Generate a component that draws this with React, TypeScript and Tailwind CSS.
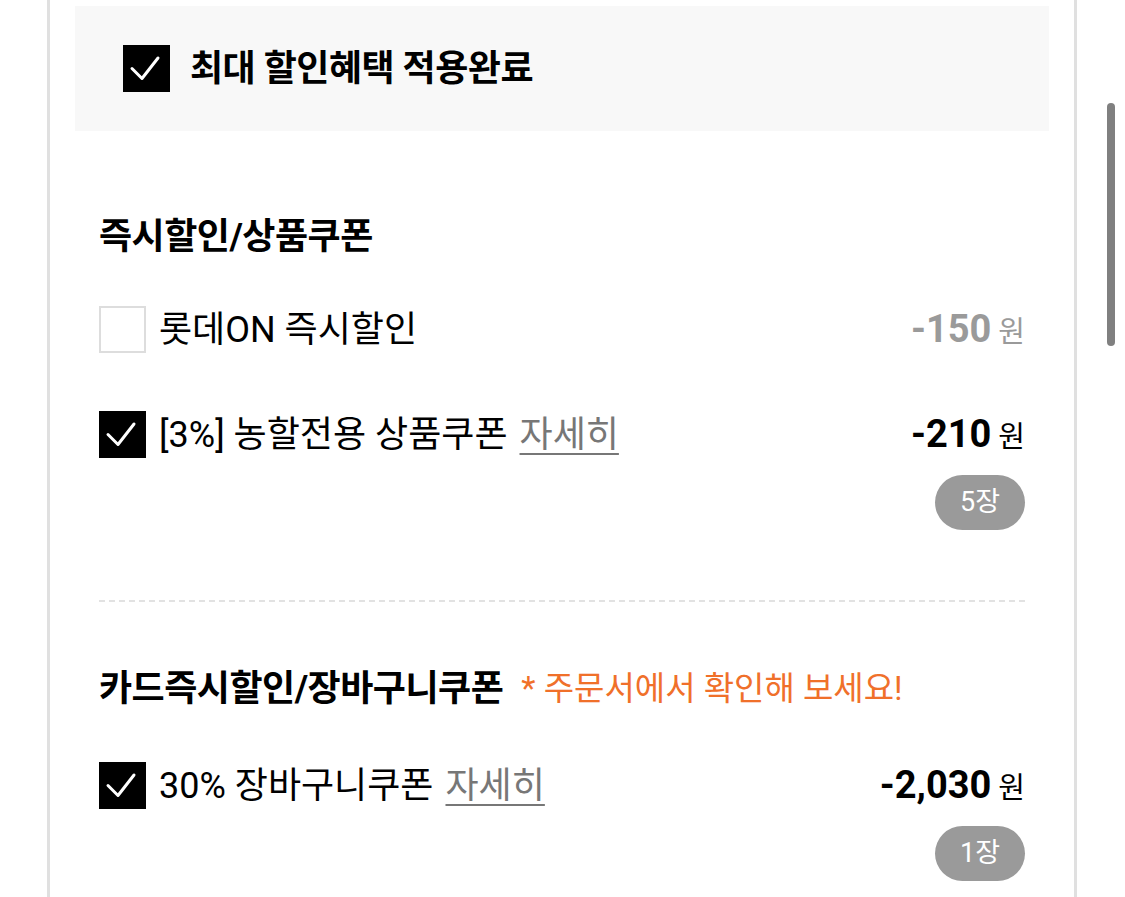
import React from "react"

const font = { fontFamily: '"Roboto", "Noto Sans CJK KR", sans-serif' }

function CheckBox({ checked }: { checked: boolean }) {
    if (!checked) {
        return <div className="w-[47px] h-[47px] shrink-0 border-2 border-[#dddddd] bg-white" />
    }
    return (
        <div className="w-[47px] h-[47px] shrink-0 bg-black flex items-center justify-center">
            <svg width="47" height="47" viewBox="0 0 47 47" fill="none">
                <path d="M9 23.5 L19 33.5 L35 13" stroke="white" strokeWidth="3" strokeLinecap="round" strokeLinejoin="round" />
            </svg>
        </div>
    )
}

function Amount({ value, muted }: { value: string; muted?: boolean }) {
    return (
        <div className={`flex items-baseline gap-[7px] ${muted ? "text-[#9a9a9a]" : "text-black"}`}>
            <span className="text-[38px] font-bold">{value}</span>
            <span className="text-[29px]">원</span>
        </div>
    )
}

function Badge({ label }: { label: string }) {
    return (
        <div className="flex justify-end mt-[17px]">
            <div className="h-[55px] px-[25px] rounded-full bg-[#9a9a9a] text-white text-[27px] flex items-center">{label}</div>
        </div>
    )
}

function CouponRow({ checked, label, detail, amount, muted }: { checked: boolean; label: string; detail?: boolean; amount: string; muted?: boolean }) {
    return (
        <div className="flex items-center justify-between h-[47px]">
            <div className="flex items-center gap-[13px]">
                <CheckBox checked={checked} />
                <span className="text-[36px] text-black">
                    {label}
                    {detail && (
                        <span className="ml-[12px] text-[#777777] underline underline-offset-[6px] decoration-[2px]">자세히</span>
                    )}
                </span>
            </div>
            <Amount value={amount} muted={muted} />
        </div>
    )
}

export default function App() {
    return (
        <div className="relative min-h-[897px] bg-white overflow-hidden" style={font}>
            {/* page scrollbar */}
            <div className="absolute left-[1107px] top-[103px] w-[8px] h-[243px] rounded-full bg-[#808080]" />

            <div className="ml-[47px] w-[1030px] min-h-[897px] border-x-[3px] border-[#e0e0e0] pt-[6px]">
                {/* Max discount banner */}
                <div className="mx-[25px] h-[125px] bg-[#f8f8f8] flex items-center pl-[48px] gap-[20px]">
                    <CheckBox checked={true} />
                    <span className="text-[36px] font-bold text-black tracking-[-0.5px]">최대 할인혜택 적용완료</span>
                </div>

                <div className="px-[49px]">
                    {/* Instant discount / product coupon */}
                    <h2 className="mt-[85px] h-[42px] flex items-center text-[36px] font-bold text-black tracking-[-0.5px]">즉시할인/상품쿠폰</h2>
                    <div className="mt-[48px]">
                        <CouponRow checked={false} label="롯데ON 즉시할인" amount="-150" muted />
                    </div>
                    <div className="mt-[58px]">
                        <CouponRow checked={true} label="[3%] 농할전용 상품쿠폰" detail amount="-210" />
                        <Badge label="5장" />
                    </div>

                    <div className="mt-[70px] border-t-2 border-dashed border-[#e2e2e2]" />

                    {/* Card discount / cart coupon */}
                    <div className="mt-[66px] h-[42px] flex items-center gap-[18px]">
                        <h2 className="text-[36px] font-bold text-black tracking-[-0.5px]">카드즉시할인/장바구니쿠폰</h2>
                        <span className="text-[33px] text-[#f0702a]">* 주문서에서 확인해 보세요!</span>
                    </div>
                    <div className="mt-[52px]">
                        <CouponRow checked={true} label="30% 장바구니쿠폰" detail amount="-2,030" />
                        <Badge label="1장" />
                    </div>
                </div>
            </div>
        </div>
    )
}
